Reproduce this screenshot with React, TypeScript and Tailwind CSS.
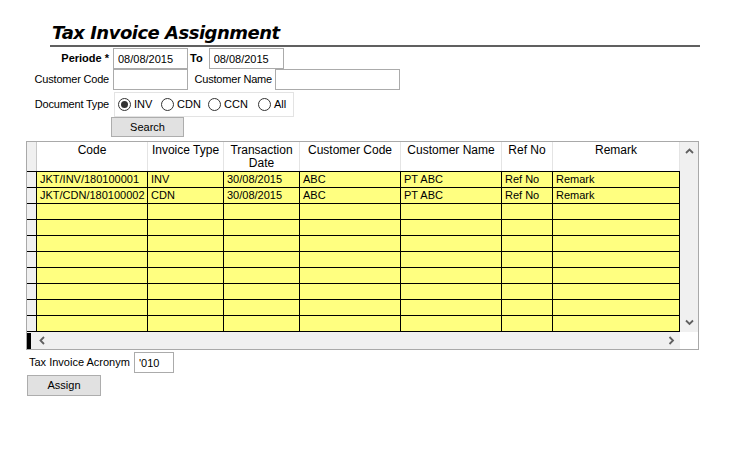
import React from 'react';

const columns = [
  { key: 'code', label: 'Code', width: 'w-[111px]' },
  { key: 'type', label: 'Invoice Type', width: 'w-[76px]' },
  { key: 'date', label: 'Transaction Date', width: 'w-[76px]' },
  { key: 'custCode', label: 'Customer Code', width: 'w-[101px]' },
  { key: 'custName', label: 'Customer Name', width: 'w-[101px]' },
  { key: 'ref', label: 'Ref No', width: 'w-[51px]' },
  { key: 'remark', label: 'Remark', width: 'w-[127px]' },
];

const rows: Record<string, string>[] = [
  { code: 'JKT/INV/180100001', type: 'INV', date: '30/08/2015', custCode: 'ABC', custName: 'PT ABC', ref: 'Ref No', remark: 'Remark' },
  { code: 'JKT/CDN/180100002', type: 'CDN', date: '30/08/2015', custCode: 'ABC', custName: 'PT ABC', ref: 'Ref No', remark: 'Remark' },
];

const docTypes = [
  { label: 'INV', width: 'w-[43px]' },
  { label: 'CDN', width: 'w-[47px]' },
  { label: 'CCN', width: 'w-[50px]' },
  { label: 'All', width: 'w-[32px]' },
];

function Chevron({ dir }: { dir: 'up' | 'down' | 'left' | 'right' }) {
  const d = {
    up: 'M1 5 L4.5 1.5 L8 5',
    down: 'M1 1.5 L4.5 5 L8 1.5',
    left: 'M5 1 L1.5 4.5 L5 8',
    right: 'M1.5 1 L5 4.5 L1.5 8',
  }[dir];
  const vert = dir === 'up' || dir === 'down';
  return (
    <svg width={vert ? 9 : 7} height={vert ? 7 : 9} viewBox={vert ? '0 0 9 7' : '0 0 7 9'}>
      <path d={d} fill="none" stroke="#606060" strokeWidth="1.8" />
    </svg>
  );
}

function TextBox({ value, width }: { value?: string; width: string }) {
  return (
    <input
      readOnly
      value={value ?? ''}
      className={`${width} h-[21px] border border-[#ababab] bg-white px-[4px] text-[11px] text-black outline-none`}
    />
  );
}

export default function App() {
  return (
    <div className="w-[750px] h-[450px] bg-white text-black overflow-hidden pt-[22px] font-['Liberation_Sans',Arial,sans-serif] text-[11px]">
      {/* Title */}
      <div className="ml-[52px] h-[22px] leading-[22px] text-[18px] font-bold italic tracking-[-0.5px] font-['DejaVu_Sans',Verdana,sans-serif]">
        Tax Invoice Assignment
      </div>
      <div className="ml-[50px] mt-[1px] w-[650px] h-[2px] bg-[#606060]" />

      {/* Filters */}
      <div className="mt-[1px] flex items-center h-[21px]">
        <div className="w-[109px] text-right font-bold">Periode *</div>
        <div className="ml-[4px]"><TextBox value="08/08/2015" width="w-[75px]" /></div>
        <div className="ml-[2px] font-bold">To</div>
        <div className="ml-[6px]"><TextBox value="08/08/2015" width="w-[75px]" /></div>
      </div>
      <div className="flex items-center h-[21px]">
        <div className="w-[109px] text-right tracking-[-0.2px]">Customer Code</div>
        <div className="ml-[4px]"><TextBox width="w-[75px]" /></div>
        <div className="w-[84px] text-right tracking-[-0.2px]">Customer Name</div>
        <div className="ml-[3px]"><TextBox width="w-[125px]" /></div>
      </div>
      <div className="mt-[2px] flex items-center h-[25px]">
        <div className="w-[109px] text-right tracking-[-0.2px]">Document Type</div>
        <div className="ml-[5px] w-[180px] h-[25px] border border-[#e3e3e3] flex items-center pl-[3px]">
          {docTypes.map((t, i) => (
            <div key={t.label} className={`${t.width} flex items-center`}>
              <span className="w-[13px] h-[13px] rounded-full border border-[#333] bg-white flex items-center justify-center">
                {i === 0 && <span className="w-[7px] h-[7px] rounded-full bg-[#333]" />}
              </span>
              <span className="ml-[3px]">{t.label}</span>
            </div>
          ))}
        </div>
      </div>
      <div className="ml-[111px] w-[73px] h-[20px] border border-[#adadad] bg-[#e1e1e1] flex items-center justify-center">
        Search
      </div>

      {/* Grid */}
      <div className="mt-[4px] ml-[26px] w-[673px] border border-[#a9a9a9] flex flex-col">
        <div className="flex">
          <div className="w-[653px] flex flex-col">
            <div className="flex h-[30px] border-b border-black bg-white">
              <div className="w-[10px] bg-[#f0f0f0] border-r border-[#c8c8c8]" />
              {columns.map((c) => (
                <div
                  key={c.key}
                  className={`${c.width} border-r border-[#e4e4e4] text-center text-[12px] leading-[13px] pt-[2px] px-[2px]`}
                >
                  {c.label}
                </div>
              ))}
            </div>
            {Array.from({ length: 10 }).map((_, r) => (
              <div key={r} className="flex h-[16px]">
                <div className="w-[10px] bg-[#f0f0f0] border-r border-b border-black" />
                {columns.map((c) => (
                  <div
                    key={c.key}
                    className={`${c.width} bg-[#ffff80] border-r border-b border-black pl-[3px] leading-[15px] whitespace-nowrap overflow-hidden`}
                  >
                    {rows[r]?.[c.key] ?? ''}
                  </div>
                ))}
              </div>
            ))}
          </div>
          <div className="w-[18px] bg-[#f0f0f0] flex flex-col items-center justify-between py-[6px]">
            <Chevron dir="up" />
            <Chevron dir="down" />
          </div>
        </div>
        <div className="flex h-[17px]">
          <div className="w-[653px] bg-[#f0f0f0] flex items-center">
            <div className="w-[4px] h-[16px] bg-black" />
            <div className="ml-[8px]"><Chevron dir="left" /></div>
            <div className="ml-auto mr-[5px]"><Chevron dir="right" /></div>
          </div>
          <div className="w-[18px] bg-white" />
        </div>
      </div>

      {/* Acronym */}
      <div className="mt-[2px] flex items-center h-[21px]">
        <div className="ml-[29px] w-[105px]">Tax Invoice Acronym</div>
        <TextBox value="'010" width="w-[40px]" />
      </div>
      <div className="mt-[2px] ml-[27px] w-[74px] h-[21px] border border-[#adadad] bg-[#e1e1e1] flex items-center justify-center">
        Assign
      </div>
    </div>
  );
}
